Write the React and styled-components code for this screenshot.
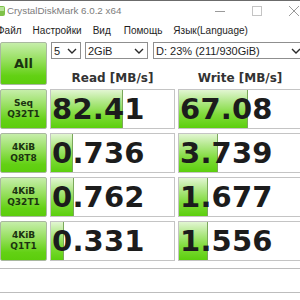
import React from 'react';
import styled, { createGlobalStyle } from 'styled-components';

const GlobalStyle = createGlobalStyle`
  html, body {
    margin: 0;
    padding: 0;
    background: #ffffff;
    overflow: hidden;
  }
`;

const Window = styled.div`
  width: 312px;
  height: 300px;
  background: #ffffff;
  display: flex;
  flex-direction: column;
  font-family: "Liberation Sans", Arial, sans-serif;
`;

const TitleBar = styled.div`
  height: 20px;
  border-top: 1px solid #6b6b6b;
  box-sizing: border-box;
  display: flex;
  align-items: center;
`;

const AppIcon = styled.svg`
  width: 6px;
  height: 12px;
  flex: none;
`;

const Title = styled.span`
  margin-left: 1px;
  font-size: 9.8px;
  color: #7c7c7c;
  white-space: nowrap;
`;

const Controls = styled.div`
  margin-left: auto;
  display: flex;
  height: 100%;
`;

const ControlButton = styled.div`
  width: 37px;
  height: 100%;
  display: flex;
  align-items: center;
  justify-content: center;
`;

const MenuBar = styled.div`
  height: 20px;
  display: flex;
  align-items: center;
  margin-left: -9px;
`;

const MenuItem = styled.span`
  font-size: 10px;
  color: #1e1e1e;
  padding: 0 ${p => p.$pad || 6}px;
  white-space: nowrap;
`;

const Top = styled.div`
  margin-top: 2px;
  display: flex;
  gap: 3px;
  height: 43px;
`;

const GreenButton = styled.div`
  width: 47px;
  height: ${p => p.$h || 40}px;
  box-sizing: border-box;
  border: 1px solid #a9b8a0;
  border-radius: 2px;
  background: linear-gradient(to bottom, #c6eeaa 0%, #92de58 45%, #63d114 80%, #5ccd0c 100%);
  display: flex;
  flex-direction: column;
  align-items: center;
  justify-content: center;
  font-family: "DejaVu Sans", Verdana, sans-serif;
  font-weight: bold;
  color: #1b3310;
  font-size: ${p => p.$big ? 13 : 9}px;
  line-height: ${p => p.$big ? 1 : '11px'};
  flex: none;
`;

const TopRight = styled.div`
  display: flex;
  flex-direction: column;
`;

const SelectRow = styled.div`
  display: flex;
  gap: 4px;
  height: 17px;
`;

const Select = styled.div`
  width: ${p => p.$w}px;
  margin-left: ${p => p.$ml || 0}px;
  box-sizing: border-box;
  border: 1px solid #8f8f8f;
  background: #fff;
  display: flex;
  align-items: center;
  justify-content: space-between;
  padding: 0 3px 0 2px;
  font-size: 11px;
  color: #1e1e1e;
  white-space: nowrap;
`;

const Headers = styled.div`
  flex: 1;
  display: grid;
  grid-template-columns: 125px 124px;
  column-gap: 3px;
  align-items: center;
  padding-top: 12px;
`;

const Header = styled.div`
  text-align: center;
  font-family: "DejaVu Sans", Verdana, sans-serif;
  font-weight: bold;
  font-size: 12px;
  color: #333333;
`;

const Rows = styled.div`
  margin-top: 4px;
  display: grid;
  grid-auto-rows: 40px;
  row-gap: 4px;
`;

const Row = styled.div`
  display: grid;
  grid-template-columns: 47px 125px 124px;
  column-gap: 3px;
`;

const ValueBox = styled.div`
  position: relative;
  box-sizing: border-box;
  border: 1px solid #c4c4c4;
  background: #ffffff;
  overflow: hidden;
  display: flex;
  align-items: center;
  padding-left: 1px;
`;

const Fill = styled.div`
  position: absolute;
  left: 0;
  top: 0;
  bottom: 0;
  box-sizing: border-box;
  border-right: 1px solid #7aa85a;
  background: linear-gradient(to bottom, #e2f6d2 0%, #b2e88a 30%, #7edb38 65%, #5ccf0e 100%);
`;

const Value = styled.span`
  position: relative;
  font-family: "DejaVu Sans", Verdana, sans-serif;
  font-weight: bold;
  font-size: 29px;
  color: #1c1c1c;
  line-height: 1;
  letter-spacing: 0.2px;
`;

const Comment = styled.div`
  margin-top: 7px;
  margin-left: -4px;
  height: 25px;
  box-sizing: border-box;
  border: 1px solid #bdbdbd;
  background: #fff;
`;

const Chevron = () => (
  <svg width="10" height="6" viewBox="0 0 10 6">
    <path d="M1 1 L5 5 L9 1" fill="none" stroke="#2a2a2a" strokeWidth="1.4" />
  </svg>
);

const results = [
  { l1: 'Seq', l2: 'Q32T1', read: '82.41', write: '67.08', rw: 72, ww: 69 },
  { l1: '4KiB', l2: 'Q8T8', read: '0.736', write: '3.739', rw: 22, ww: 39 },
  { l1: '4KiB', l2: 'Q32T1', read: '0.762', write: '1.677', rw: 23, ww: 29 },
  { l1: '4KiB', l2: 'Q1T1', read: '0.331', write: '1.556', rw: 13, ww: 29 },
];

const Result = ({ value, width }) => (
  <ValueBox>
    <Fill style={{ width: `${width}px` }} />
    <Value>{value}</Value>
  </ValueBox>
);

export default function App() {
  return (
    <>
      <GlobalStyle />
      <Window>
        <TitleBar>
          <AppIcon viewBox="8 0 6 12">
            <rect x="1" y="1" width="12" height="10" rx="2" fill="#7fc24a" />
            <rect x="2" y="2" width="10" height="4" fill="#b8e49a" />
          </AppIcon>
          <Title>CrystalDiskMark 6.0.2 x64</Title>
          <Controls>
            <ControlButton>
              <svg width="10" height="10" viewBox="0 0 10 10">
                <path d="M0 5.5 H10" stroke="#9a9a9a" strokeWidth="1" />
              </svg>
            </ControlButton>
            <ControlButton>
              <svg width="10" height="10" viewBox="0 0 10 10">
                <rect x="0.5" y="0.5" width="9" height="9" fill="none" stroke="#c4c4c4" strokeWidth="1" />
              </svg>
            </ControlButton>
            <ControlButton>
              <svg width="10" height="10" viewBox="0 0 10 10">
                <path d="M0 0 L10 10 M10 0 L0 10" stroke="#9a9a9a" strokeWidth="1" />
              </svg>
            </ControlButton>
          </Controls>
        </TitleBar>
        <MenuBar>
          <MenuItem>Файл</MenuItem>
          <MenuItem $pad={5}>Настройки</MenuItem>
          <MenuItem>Вид</MenuItem>
          <MenuItem $pad={7}>Помощь</MenuItem>
          <MenuItem $pad={4}>Язык(Language)</MenuItem>
        </MenuBar>
        <Top>
          <GreenButton $big $h={43}>All</GreenButton>
          <TopRight>
            <SelectRow>
              <Select $w={30} $ml={1}>5<Chevron /></Select>
              <Select $w={63}>2GiB<Chevron /></Select>
              <Select $w={152} $ml={1}>D: 23% (211/930GiB)<Chevron /></Select>
            </SelectRow>
            <Headers>
              <Header>Read [MB/s]</Header>
              <Header>Write [MB/s]</Header>
            </Headers>
          </TopRight>
        </Top>
        <Rows>
          {results.map((r, i) => (
            <Row key={i}>
              <GreenButton>
                <span>{r.l1}</span>
                <span>{r.l2}</span>
              </GreenButton>
              <Result value={r.read} width={r.rw} />
              <Result value={r.write} width={r.ww} />
            </Row>
          ))}
        </Rows>
        <Comment />
      </Window>
    </>
  );
}
